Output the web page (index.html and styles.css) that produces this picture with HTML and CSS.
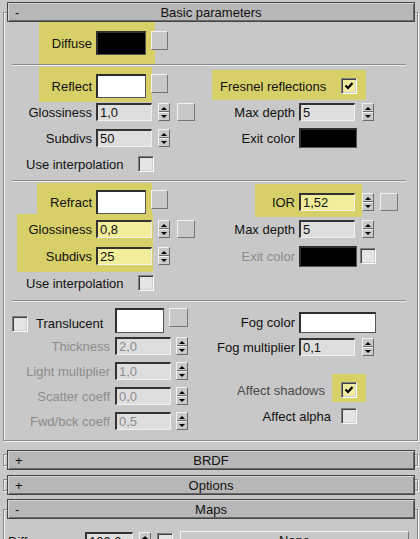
FILE: index.html
```html
<!DOCTYPE html>
<html lang="en">
<head>
    <meta charset="UTF-8">
    <meta name="viewport" content="width=device-width, initial-scale=1.0">
    <title>Basic parameters</title>
    <link rel="stylesheet" href="styles.css">
</head>
<body>
    <div class="rollout open">
        <div class="roll-head"><span class="sign">-</span><span class="title">Basic parameters</span></div>

        <!-- Diffuse -->
        <div class="group g-diffuse">
            <span class="mark m-diffuse"></span>
            <div class="row">
                <div class="side l">
                    <span class="lbl">Diffuse</span>
                    <span class="swatch black"></span>
                    <span class="mbtn"></span>
                </div>
            </div>
        </div>
        <div class="sep"></div>

        <!-- Reflection -->
        <div class="group g-reflect">
            <span class="mark m-reflect"></span>
            <span class="mark m-fresnel"></span>
            <div class="row">
                <div class="side l">
                    <span class="lbl">Reflect</span>
                    <span class="swatch"></span>
                    <span class="mbtn"></span>
                </div>
                <div class="side r">
                    <span class="check-lbl fresnel">Fresnel reflections</span>
                    <span class="cb hl"><svg width="10" height="10" viewBox="0 0 10 10"><path d="M1.5 4.5 L4 7 L8.5 2" stroke="#000" stroke-width="2.2" fill="none"/></svg></span>
                </div>
            </div>
            <div class="row">
                <div class="side l">
                    <span class="lbl">Glossiness</span>
                    <span class="num">1,0</span>
                    <span class="spin"></span>
                    <span class="mbtn sq"></span>
                </div>
                <div class="side r">
                    <span class="lbl">Max depth</span>
                    <span class="num">5</span>
                    <span class="spin"></span>
                </div>
            </div>
            <div class="row">
                <div class="side l">
                    <span class="lbl">Subdivs</span>
                    <span class="num">50</span>
                    <span class="spin"></span>
                </div>
                <div class="side r">
                    <span class="lbl">Exit color</span>
                    <span class="swatch black exit"></span>
                </div>
            </div>
            <div class="row">
                <div class="side l">
                    <span class="check-lbl interp">Use interpolation</span>
                    <span class="cb"></span>
                </div>
            </div>
        </div>
        <div class="sep"></div>

        <!-- Refraction -->
        <div class="group g-refract">
            <span class="mark m-refract"></span>
            <span class="mark m-gloss"></span>
            <span class="mark m-ior"></span>
            <div class="row">
                <div class="side l">
                    <span class="lbl">Refract</span>
                    <span class="swatch"></span>
                    <span class="mbtn"></span>
                </div>
                <div class="side r">
                    <span class="lbl">IOR</span>
                    <span class="num hl">1,52</span>
                    <span class="spin"></span>
                    <span class="mbtn sq ior"></span>
                </div>
            </div>
            <div class="row">
                <div class="side l">
                    <span class="lbl">Glossiness</span>
                    <span class="num hl">0,8</span>
                    <span class="spin"></span>
                    <span class="mbtn sq"></span>
                </div>
                <div class="side r">
                    <span class="lbl">Max depth</span>
                    <span class="num">5</span>
                    <span class="spin"></span>
                </div>
            </div>
            <div class="row">
                <div class="side l">
                    <span class="lbl">Subdivs</span>
                    <span class="num hl">25</span>
                    <span class="spin"></span>
                </div>
                <div class="side r">
                    <span class="lbl off">Exit color</span>
                    <span class="swatch black exit tall"></span>
                    <span class="cb exit-cb"></span>
                </div>
            </div>
            <div class="row">
                <div class="side l">
                    <span class="check-lbl interp">Use interpolation</span>
                    <span class="cb"></span>
                </div>
            </div>
        </div>
        <div class="sep"></div>

        <!-- Translucency / fog -->
        <div class="group g-trans">
            <span class="mark m-shadows"></span>
            <div class="col-l">
                <div class="trow">
                    <span class="cb low"></span>
                    <span class="trans-lbl">Translucent</span>
                    <span class="swatch trans"></span>
                    <span class="mbtn big"></span>
                </div>
                <div class="srow first">
                    <span class="lbl off">Thickness</span>
                    <span class="num off">2,0</span>
                    <span class="spin"></span>
                </div>
                <div class="srow">
                    <span class="lbl off">Light multiplier</span>
                    <span class="num off">1,0</span>
                    <span class="spin"></span>
                </div>
                <div class="srow">
                    <span class="lbl off">Scatter coeff</span>
                    <span class="num off">0,0</span>
                    <span class="spin"></span>
                </div>
                <div class="srow">
                    <span class="lbl off">Fwd/bck coeff</span>
                    <span class="num off">0,5</span>
                    <span class="spin"></span>
                </div>
            </div>
            <div class="col-r">
                <div class="frow">
                    <span class="lbl">Fog color</span>
                    <span class="swatch fog"></span>
                </div>
                <div class="frow mult">
                    <span class="lbl">Fog multiplier</span>
                    <span class="num">0,1</span>
                    <span class="spin"></span>
                </div>
                <div class="frow shadows">
                    <span class="check-lbl">Affect shadows</span>
                    <span class="cb hl"><svg width="10" height="10" viewBox="0 0 10 10"><path d="M1.5 4.5 L4 7 L8.5 2" stroke="#000" stroke-width="2.2" fill="none"/></svg></span>
                </div>
                <div class="frow alpha">
                    <span class="check-lbl">Affect alpha</span>
                    <span class="cb"></span>
                </div>
            </div>
        </div>
    </div>

    <div class="rollout closed">
        <div class="roll-head"><span class="sign">+</span><span class="title">BRDF</span></div>
    </div>
    <div class="rollout closed">
        <div class="roll-head"><span class="sign">+</span><span class="title">Options</span></div>
    </div>
    <div class="rollout open maps">
        <div class="roll-head"><span class="sign">-</span><span class="title">Maps</span></div>
        <div class="map-row">
            <span class="map-lbl">Diffuse</span>
            <span class="num small">100,0</span>
            <span class="spin"></span>
            <span class="cb"></span>
            <span class="none-btn">None</span>
        </div>
    </div>
</body>
</html>
```

FILE: styles.css
```css
body {
    margin: 0;
    height: 539px;
    overflow: hidden;
    background: #c8c8c8;
    font-family: "Liberation Sans", Arial, sans-serif;
    font-size: 13px;
    color: #111;
}
.rollout {
    margin: 0 2px 1px 3px;
    border: 1px solid #8a8a8a;
    box-shadow: inset 1px 1px 0 #f2f2f2, 1px 1px 0 #f2f2f2;
}
.rollout.open {
    margin-top: 12px;
}
.rollout.closed {
    margin-top: 13px;
}
.rollout.maps {
    margin-top: 18px;
}
.roll-head {
    display: grid;
    grid-template-columns: 30px 1fr 30px;
    align-items: center;
    height: 20px;
    box-sizing: border-box;
    margin: -11px 2px 0 3px;
    background: #b7b7b7;
    border: 1px solid #444;
    box-shadow: inset 1px 1px 0 #d6d6d6, inset -1px -1px 0 #6a6a6a;
}
.closed .roll-head {
    margin: -5px 2px -5px 3px;
}
.sign {
    padding-left: 7px;
}
.title {
    text-align: center;
}
.group {
    position: relative;
    z-index: 0;
    padding-left: 8px;
}
.mark {
    position: absolute;
    z-index: -1;
    background: #d7d068;
}
.m-diffuse { left: 35px; top: 0; width: 116px; height: 42px; }
.m-reflect { left: 35px; top: 1px; width: 113px; height: 35px; }
.m-fresnel { left: 208px; top: 4px; width: 154px; height: 30px; }
.m-refract { left: 33px; top: 1px; width: 115px; height: 31px; }
.m-gloss { left: 13px; top: 32px; width: 136px; height: 58px; }
.m-ior { left: 251px; top: 2px; width: 107px; height: 33px; }
.m-shadows { left: 328px; top: 72px; width: 34px; height: 28px; }

.g-diffuse {
    padding-top: 9px;
    padding-bottom: 9px;
}
.g-reflect {
    display: flex;
    flex-direction: column;
    gap: 2px;
    padding-top: 8px;
    padding-bottom: 4px;
}
.g-refract {
    display: flex;
    flex-direction: column;
    gap: 3px;
    padding-top: 8px;
    padding-bottom: 5px;
}
.sep {
    margin: 0 11px 0 8px;
    border-top: 1px solid #8a8a8a;
    border-bottom: 1px solid #ececec;
}
.row {
    display: flex;
    height: 24px;
}
.side {
    display: flex;
    align-items: center;
}
.side.l {
    width: 198px;
}
.lbl {
    flex-shrink: 0;
    text-align: right;
    white-space: nowrap;
}
.l .lbl {
    width: 80px;
    margin-right: 4px;
}
.r .lbl, .col-r .lbl {
    width: 85px;
    margin-right: 4px;
}
.off {
    color: #8c8c8c;
}
.check-lbl {
    white-space: nowrap;
}
.fresnel {
    width: 121px;
    margin-left: 10px;
}
.interp {
    width: 112px;
    margin-left: 14px;
}

/* controls */
.swatch {
    flex-shrink: 0;
    align-self: flex-start;
    width: 50px;
    height: 24px;
    box-sizing: border-box;
    background: #fff;
    border-style: solid;
    border-width: 2px 1px 1px 2px;
    border-color: #2e2e2e #555 #555 #2e2e2e;
}
.swatch.black {
    background: #000;
}
.swatch.exit {
    align-self: center;
    width: 58px;
    height: 20px;
}
.swatch.exit.tall {
    height: 21px;
}
.mbtn {
    flex-shrink: 0;
    align-self: flex-start;
    width: 17px;
    height: 19px;
    margin-left: 5px;
    box-sizing: border-box;
    background: #c8c8c8;
    border: 1px solid;
    border-color: #f2f2f2 #777 #777 #f2f2f2;
}
.mbtn.sq {
    align-self: center;
    width: 18px;
    height: 18px;
    margin-left: 7px;
}
.mbtn.ior {
    margin-left: 6px;
}
.num {
    flex-shrink: 0;
    width: 56px;
    height: 18px;
    box-sizing: border-box;
    padding-left: 2px;
    line-height: 15px;
    background: #dedede;
    border-style: solid;
    border-width: 2px 1px 1px 2px;
    border-color: #333 #f0f0f0 #f0f0f0 #333;
}
.num.hl {
    background: #f1ed98;
}
.spin {
    flex-shrink: 0;
    display: flex;
    flex-direction: column;
    align-items: center;
    justify-content: space-around;
    width: 12px;
    height: 18px;
    margin-left: 6px;
    box-sizing: border-box;
    border: 1px solid;
    border-color: #f2f2f2 #6a6a6a #6a6a6a #f2f2f2;
    background: linear-gradient(#c8c8c8 0 7px, #6a6a6a 7px 8px, #f2f2f2 8px 9px, #c8c8c8 9px);
}
.spin::before {
    content: "";
    border-left: 3px solid transparent;
    border-right: 3px solid transparent;
    border-bottom: 3px solid #000;
}
.spin::after {
    content: "";
    border-left: 3px solid transparent;
    border-right: 3px solid transparent;
    border-top: 3px solid #000;
}
.r .spin {
    margin-left: 7px;
}
.cb {
    flex-shrink: 0;
    display: flex;
    align-items: center;
    justify-content: center;
    width: 16px;
    height: 16px;
    box-sizing: border-box;
    background: #e4e4e4;
    border: 1px solid;
    border-color: #808080 #fbfbfb #fbfbfb #808080;
    box-shadow: inset 1px 1px 0 #404040, inset -1px -1px 0 #d0d0d0;
}
.cb.hl {
    background: #efeba0;
}
.exit-cb {
    margin-left: 3px;
}

/* translucency */
.g-trans {
    display: flex;
}
.col-l {
    width: 198px;
    padding: 6px 0 10px;
}
.trow {
    display: flex;
    height: 25px;
}
.trow .cb {
    align-self: flex-end;
    margin-bottom: 1px;
}
.trans-lbl {
    align-self: flex-end;
    width: 79px;
    margin-left: 8px;
    line-height: 16px;
    margin-bottom: 1px;
}
.swatch.trans {
    width: 49px;
    height: 25px;
}
.mbtn.big {
    width: 19px;
    height: 19px;
}
.srow {
    display: flex;
    align-items: center;
    height: 18px;
    margin-top: 7px;
}
.srow.first {
    margin-top: 4px;
}
.srow .lbl {
    width: 98px;
    margin-right: 5px;
}
.srow .spin {
    margin-left: 5px;
}
.col-r {
    padding-top: 10px;
}
.frow {
    display: flex;
    align-items: center;
    height: 21px;
}
.swatch.fog {
    align-self: center;
    width: 77px;
    height: 21px;
}
.frow.mult {
    height: 18px;
    margin-top: 5px;
}
.frow.mult .spin {
    margin-left: 7px;
}
.frow.shadows {
    height: 16px;
    margin-top: 26px;
}
.shadows .check-lbl {
    width: 115px;
    margin-right: 16px;
    text-align: right;
    color: #4a4a4a;
}
.frow.alpha {
    height: 16px;
    margin-top: 10px;
}
.alpha .check-lbl {
    width: 121px;
    margin-right: 10px;
    text-align: right;
}

/* maps */
.map-row {
    display: flex;
    align-items: center;
    height: 20px;
    padding: 12px 0 0 4px;
}
.map-lbl {
    width: 77px;
}
.num.small {
    width: 48px;
}
.map-row .cb {
    margin-left: 6px;
}
.none-btn {
    width: 229px;
    height: 20px;
    margin-left: 7px;
    box-sizing: border-box;
    text-align: center;
    line-height: 18px;
    background: #c8c8c8;
    border: 1px solid;
    border-color: #f2f2f2 #777 #777 #f2f2f2;
}
```
